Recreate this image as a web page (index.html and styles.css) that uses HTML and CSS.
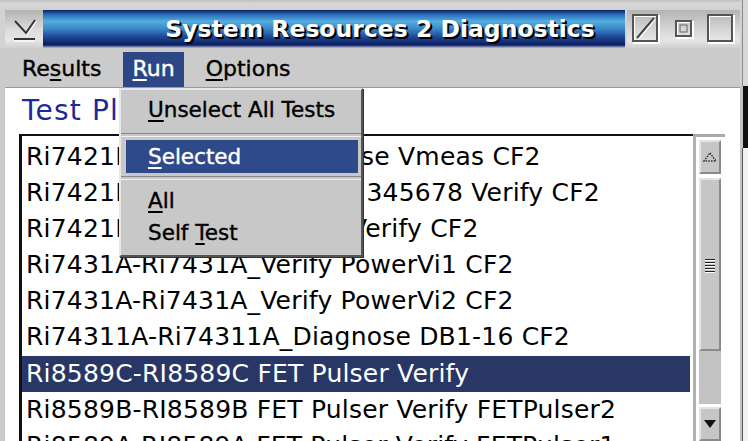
FILE: index.html
```html
<!DOCTYPE html>
<html>
<head>
<meta charset="utf-8">
<link rel="stylesheet" href="styles.css">
</head>
<body>
<div class="screen">
  <div class="window">
    <div class="titlebar">
      <div class="tb-left">
        <svg width="38" height="38" viewBox="0 0 38 38">
          <polyline points="10,11 21,23 30,10" fill="none" stroke="#f4f4f4" stroke-width="2" transform="translate(1,1)"/>
          <line x1="9" y1="29" x2="30" y2="29" stroke="#f4f4f4" stroke-width="2" transform="translate(0,2)"/>
          <polyline points="10,11 21,23 30,10" fill="none" stroke="#333" stroke-width="2"/>
          <line x1="9" y1="29" x2="30" y2="29" stroke="#333" stroke-width="2"/>
        </svg>
      </div>
      <div class="title"><span>System Resources 2 Diagnostics</span></div>
      <div class="tb-right">
        <svg class="tbb" width="30" height="32" viewBox="0 0 30 32">
          <rect x="3" y="3" width="25" height="27" fill="none" stroke="#fff" stroke-width="2"/>
          <rect x="2" y="2" width="24" height="26" fill="none" stroke="#555" stroke-width="2"/>
          <line x1="6" y1="25" x2="23" y2="5" stroke="#fff" stroke-width="2" transform="translate(1,1)"/>
          <line x1="6" y1="25" x2="23" y2="5" stroke="#444" stroke-width="2"/>
        </svg>
        <svg class="tbb small" width="20" height="20" viewBox="0 0 20 20">
          <rect x="3" y="3" width="16" height="16" fill="none" stroke="#fff" stroke-width="2"/>
          <rect x="2" y="2" width="15" height="15" fill="none" stroke="#555" stroke-width="2"/>
          <rect x="6" y="6" width="7" height="7" fill="none" stroke="#666" stroke-width="1"/>
        </svg>
        <svg class="tbb" width="30" height="32" viewBox="0 0 30 32">
          <rect x="3" y="3" width="25" height="27" fill="none" stroke="#fff" stroke-width="2"/>
          <rect x="2" y="2" width="24" height="26" fill="none" stroke="#555" stroke-width="2"/>
        </svg>
      </div>
    </div>
    <div class="menubar">
      <span class="mitem">Re<u>s</u>ults</span>
      <span class="mitem active"><u>R</u>un</span>
      <span class="mitem"><u>O</u>ptions</span>
    </div>
    <div class="panel">
      <div class="heading">Test Plan</div>
      <div class="listwrap">
        <div class="list">
          <div class="row">Ri7421B-Ri7421Br_Diagnose Vmeas CF2</div>
          <div class="row">Ri7421B-Ri7421B_Mask 12345678 Verify CF2</div>
          <div class="row">Ri7421B-Ri7421B_Status Verify CF2</div>
          <div class="row">Ri7431A-Ri7431A_Verify PowerVi1 CF2</div>
          <div class="row">Ri7431A-Ri7431A_Verify PowerVi2 CF2</div>
          <div class="row">Ri74311A-Ri74311A_Diagnose DB1-16 CF2</div>
          <div class="row sel">Ri8589C-RI8589C FET Pulser Verify</div>
          <div class="row">Ri8589B-RI8589B FET Pulser Verify FETPulser2</div>
          <div class="row">Ri8589A-RI8589A FET Pulser Verify FETPulser1</div>
        </div>
        <div class="scrollbar">
          <div class="sb-btn">
            <svg width="14" height="10" viewBox="0 0 14 10"><polygon points="7,1 13,9 1,9" fill="none" stroke="#333" stroke-width="1.5" stroke-dasharray="1.5 1.2"/></svg>
          </div>
          <div class="sb-thumb">
            <div class="grip"><i></i><i></i><i></i><i></i><i></i></div>
          </div>
          <div class="sb-trough"></div>
          <div class="sb-btn">
            <svg width="14" height="10" viewBox="0 0 14 10"><polygon points="1,1 13,1 7,9" fill="#111"/></svg>
          </div>
        </div>
      </div>
    </div>
  </div>
  <div class="edge">
    <div class="edge-top"></div>
    <div class="edge-dark"></div>
    <div class="edge-bot"></div>
  </div>
</div>

<div class="dropdown">
  <div class="ditem first"><u>U</u>nselect All Tests</div>
  <div class="dsep"></div>
  <div class="ditem hl"><u>S</u>elected</div>
  <div class="dsep"></div>
  <div class="ditem"><u>A</u>ll</div>
  <div class="ditem last">Self <u>T</u>est</div>
</div>
</body>
</html>
```

FILE: styles.css
```css
html, body {
  margin: 0;
  padding: 0;
}
body {
  width: 748px;
  height: 441px;
  overflow: hidden;
  background: #cbcbcb;
  font-family: "DejaVu Sans", sans-serif;
  position: relative;
}
u {
  text-decoration: underline;
  text-underline-offset: 3px;
  text-decoration-thickness: 2px;
}
.screen {
  display: flex;
  height: 441px;
}
.window {
  width: 740px;
  display: flex;
  flex-direction: column;
  background: #cbcbcb;
}
.titlebar {
  display: flex;
  height: 38px;
  padding: 10px 0 0 5px;
  background: linear-gradient(#bdbdbd 0, #d6d6d6 3px, #d2d2d2 10px);
}
.tb-left {
  width: 38px;
  height: 38px;
  background: linear-gradient(#b4b4b4, #dedede 55%, #e6e6e6 80%, #cfcfcf);
}
.tb-left svg { display: block; }
.title {
  width: 582px;
  height: 38px;
  box-sizing: border-box;
  padding-left: 92px;
  background: linear-gradient(#0d1f63 0, #2a6cb8 12%, #53aee0 30%, #3b86c6 50%, #1e4a98 70%, #0c1b5e 92%, #b9c4d8 100%);
  display: flex;
  align-items: center;
  justify-content: center;
}
.title span {
  color: #fff;
  font-weight: bold;
  font-size: 23.5px;
  text-shadow: 1px 1px 0 #000, 2px 2px 0 #000;
}
.tb-right {
  width: 113px;
  margin-left: 2px;
  height: 38px;
  background: linear-gradient(#b4b4b4, #d8d8d8 55%, #e6e6e6 80%, #d0d0d0);
  display: flex;
  align-items: center;
  padding-left: 4px;
  box-sizing: border-box;
}
.tbb { display: block; }
.tbb.small { margin: 0 12px 0 13px; }
.menubar {
  height: 39px;
  display: flex;
  align-items: flex-end;
  padding-left: 13px;
  font-size: 22px;
  color: #000;
}
.mitem {
  height: 35px;
  line-height: 33px;
  padding: 0 9px;
  margin-right: 13px;
  -webkit-text-stroke: 0.4px #000;
}
.mitem.active {
  background: #2d4685;
  color: #fff;
  -webkit-text-stroke: 0.4px #fff;
  margin-right: 13px;
}
.panel {
  flex: 1;
  background: #fff;
  margin-left: 5px;
  border-top: 1px solid #9a9a9a;
  display: flex;
  flex-direction: column;
  overflow: hidden;
}
.heading {
  height: 47px;
  line-height: 46px;
  padding-left: 17px;
  color: #1b2a96;
  font-size: 28px;
  letter-spacing: 1.2px;
}
.listwrap {
  display: flex;
  margin-left: 14px;
  width: 706px;
  flex: 1;
}
.list {
  flex: 1;
  border-left: 3px solid #111;
  border-top: 2px solid #111;
  padding-top: 3px;
  font-size: 25px;
  letter-spacing: 0.2px;
  overflow: hidden;
}
.row {
  height: 36px;
  line-height: 36px;
  padding-left: 4px;
  white-space: nowrap;
  color: #000;
}
.row.sel {
  background: #283766;
  color: #fff;
  margin-right: 3px;
  margin-top: 1px;
}
.scrollbar {
  width: 26px;
  border-top: 3px solid #a8a8a8;
  border-left: 3px solid #b0b0b0;
  padding: 3px 0 0 3px;
  display: flex;
  flex-direction: column;
  gap: 4px;
  background: #fff;
}
.sb-btn {
  width: 22px;
  height: 34px;
  box-sizing: border-box;
  background: #c6c6c6;
  border-top: 2px solid #e4e4e4;
  border-left: 2px solid #e4e4e4;
  border-right: 2px solid #8a8a8a;
  border-bottom: 2px solid #8a8a8a;
  display: flex;
  align-items: center;
  justify-content: center;
}
.sb-thumb {
  width: 22px;
  height: 173px;
  box-sizing: border-box;
  background: #c6c6c6;
  border-top: 2px solid #e4e4e4;
  border-left: 2px solid #e4e4e4;
  border-right: 2px solid #8a8a8a;
  border-bottom: 2px solid #8a8a8a;
  display: flex;
  align-items: center;
  justify-content: center;
}
.grip {
  display: flex;
  flex-direction: column;
  gap: 1px;
  margin-top: 2px;
}
.grip i {
  display: block;
  width: 10px;
  height: 1px;
  background: #222;
  border-bottom: 1px solid #fff;
}
.sb-trough {
  width: 22px;
  height: 53px;
  background: #c2c2c2;
  margin: -4px 0 -1px;
}
.edge {
  width: 8px;
  display: flex;
  flex-direction: column;
}
.edge-top {
  height: 86px;
  background: linear-gradient(90deg, #d2d2d2 0, #d2d2d2 2px, #8a8a8a 2px, #8a8a8a 3px, #d8d8d8 3px);
}
.edge-dark {
  height: 62px;
  background: linear-gradient(90deg, #c4c4c4 0, #c4c4c4 3px, #111 3px);
}
.edge-bot {
  flex: 1;
  background: linear-gradient(90deg, #c4c4c4 0, #c4c4c4 2px, #555 2px, #555 3px, #f2f2f2 3px);
}
.dropdown {
  position: absolute;
  left: 119px;
  top: 88px;
  width: 244px;
  height: 169px;
  box-sizing: border-box;
  background: #c8c8c8;
  border-top: 2px solid #e8e8e8;
  border-left: 2px solid #e8e8e8;
  border-right: 2px solid #555;
  border-bottom: 2px solid #555;
  padding: 2px 3px 0 5px;
  font-size: 21.5px;
  box-shadow: 1px 1px 0 #333;
}
.ditem {
  height: 35px;
  line-height: 35px;
  padding-left: 22px;
  -webkit-text-stroke: 0.4px #000;
}
.ditem.first { height: 38px; line-height: 36px; }
.ditem.last { height: 31px; line-height: 30px; }
.ditem.hl {
  background: #2f4a8a;
  color: #fff;
  -webkit-text-stroke: 0.4px #fff;
  height: 33px;
  line-height: 33px;
}
.dsep {
  height: 2px;
  margin: 3px -3px 3px -5px;
  border-top: 1px solid #888;
  border-bottom: 1px solid #f0f0f0;
}
```
